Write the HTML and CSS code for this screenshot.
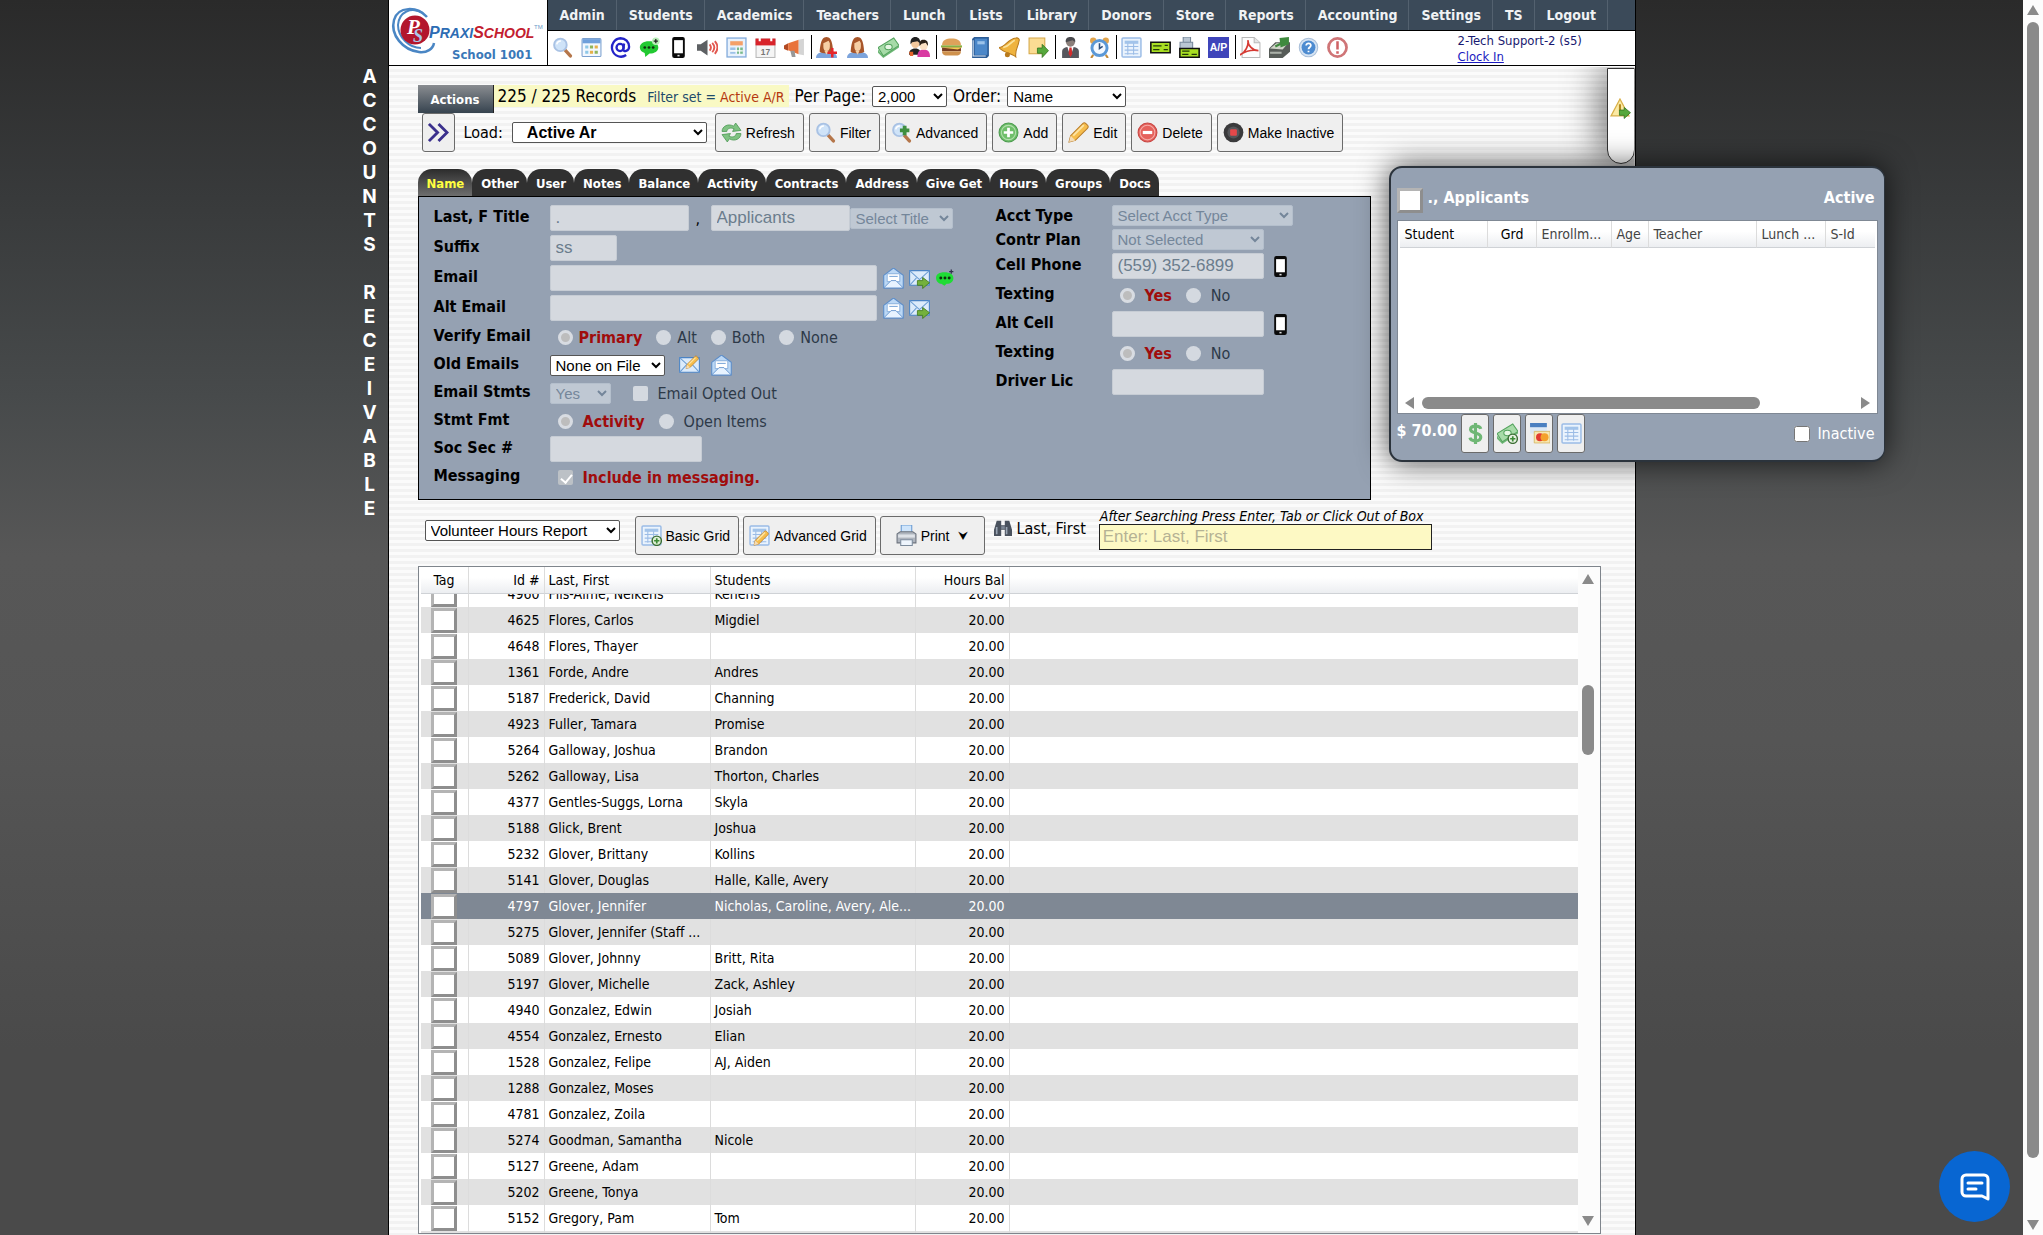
FILE: index.html
```html
<!DOCTYPE html>
<html lang="en">
  <head>
    <meta charset="UTF-8" />
    <meta name="viewport" content="width=device-width, initial-scale=1.0" />
    <title>PraxiSchool - Accounts Receivable</title>
    <link rel="stylesheet" href="styles.css">
  </head>
  <body>
    <!-- Icon set -->
    <svg class="icon-defs" width="0" height="0" aria-hidden="true">
      <symbol id="i-search" viewBox="0 0 20 20">
        <path d="M12.5 12.5l5 5.5" stroke="#b5764a" stroke-width="3.2" stroke-linecap="round"/>
        <circle cx="8" cy="7.500" r="6" fill="#cfe3f8" stroke="#a9c2e4" stroke-width="1.800"/>
        <path d="M4.500 7a4 4 0 0 1 4-3.200" stroke="#fff" stroke-width="1.500" fill="none"/>
      </symbol>
      <symbol id="i-month" viewBox="0 0 20 20">
        <rect x="1" y="1.500" width="18" height="17" rx="1" fill="#f3f8ff" stroke="#7ba0cf"/>
        <rect x="1.500" y="2" width="17" height="4" fill="#6f9fdb"/>
        <path d="M4 8h3v3H4zM4 13h3v3H4z" fill="#8fc8e8"/><path d="M8.500 8h3v3h-3zM13 13h3v3h-3z" fill="#8fb45c"/><path d="M13 8h3v3h-3zM8.500 13h3v3h-3z" fill="#e5b04a"/>
      </symbol>
      <symbol id="i-at" viewBox="0 0 20 20">
        <g fill="none" stroke="#2424c8" stroke-width="2.200"><circle cx="9.600" cy="10" r="3.400"/><path d="M13.400 6.200l-.8 5.800c0 2.400 5.600 1.800 5.600-2.600 0-4.800-3.600-8.200-8.200-8.200a8.600 8.800 0 1 0 5.400 16"/></g>
      </symbol>
      <symbol id="i-chat" viewBox="0 0 20 20">
        <path d="M9.500 4C4 4 .8 6.500.8 10c0 2.500 1.800 4.400 4.600 5.200L6 19l4-3.200c5 0 8.400-2.400 8.400-5.800S15 4 9.500 4z" fill="#22c932"/>
        <circle cx="16" cy="4" r="3.600" fill="#b9efb9"/><path d="M16 2v4M14 4h4" stroke="#222" stroke-width="1.200"/>
        <g fill="#10300f"><circle cx="5.500" cy="10" r="1.300"/><circle cx="9.500" cy="10" r="1.300"/><circle cx="13.500" cy="10" r="1.300"/></g>
      </symbol>
      <symbol id="i-chat-flat" viewBox="0 0 20 20">
        <path d="M9 4C4 4 1 6 1 9.500S4 15 6 15l3 2 2-2c4 0 6.500-2 6.500-5.500S14 4 9 4z" fill="#1fdc35"/>
        <path d="M15.500 1.500v4M13.500 3.500h4" stroke="#33304a" stroke-width="1.200"/>
        <g fill="#10300f"><circle cx="5.500" cy="9.500" r="1.400"/><circle cx="9.500" cy="9.500" r="1.400"/><circle cx="13.500" cy="9.500" r="1.400"/></g>
      </symbol>
      <symbol id="i-phone" viewBox="0 0 20 20">
        <rect x="4" y="0" width="12" height="20" rx="2" fill="#0a0a0a"/><rect x="5.800" y="3" width="8.400" height="12.500" fill="#fff"/><rect x="9" y="17" width="2" height="1.500" fill="#ddd"/>
      </symbol>
      <symbol id="i-speaker" viewBox="0 0 20 20">
        <path d="M0 7h3.500L10 2.500v15L3.500 13H0z" fill="#5d6063"/><path d="M12 7q2.500 3 0 6M14.500 5.500q4 4.500 0 9M17 4q5 6 0 12" fill="none" stroke="#e2574f" stroke-width="1.800"/>
      </symbol>
      <symbol id="i-sheet" viewBox="0 0 20 20">
        <rect x="1" y="1" width="18" height="18" fill="#e9f2fc" stroke="#86aedd" stroke-width="1.300"/><path d="M4 4h12v4H4z" fill="#f4a069"/><path d="M4 10h5v2.500H4zM4 14h5v2H4z" fill="#9dc2e8"/><path d="M10.500 10H16v6h-5.500z" fill="#78b98b"/><path d="M4 13.200h12M13 9v8" stroke="#fff"/>
      </symbol>
      <symbol id="i-horn" viewBox="0 0 20 20">
        <path d="M0 8l4-2v7l-4-1.500z" fill="#b24a22"/><path d="M4 6l10-3.500v14L4 12.500z" fill="#e9733b"/><path d="M14 2.500l5-.8v15.600l-5-.8z" fill="#d4d4d4"/><path d="M6 13h4l1 6H7.500z" fill="#989898"/>
      </symbol>
      <symbol id="i-woman" viewBox="0 0 20 20">
        <path d="M0 20c0-4 3-6 10-6s10 2 10 6z" fill="#7da4dc"/><path d="M3.500 14C4 11 4 0 10 0s6 11 6.500 14c-2 2-11 2-13 0z" fill="#a8562a"/><path d="M7 6l5-2.500 1.200 2.500v3c0 3-1.400 4.400-3.200 4.400S7 12 7 9z" fill="#f6cfa5"/><path d="M8 13h4l-2 4z" fill="#f6cfa5"/>
      </symbol>
      <symbol id="i-woman-add" viewBox="0 0 20 20">
        <use href="#i-woman"/><path d="M15.500 10.500v9M11 15h9" stroke="#e5252a" stroke-width="2.400"/>
      </symbol>
      <symbol id="i-cash" viewBox="0 0 20 20">
        <path d="M0 12v3l5 5 15-10V8L5 18z" fill="#6fb877"/><path d="M0 10L15 1l5 7L5 18z" fill="#a7dba8" stroke="#54a35e"/><ellipse cx="10" cy="9.500" rx="3.500" ry="2.600" fill="#e6f7e4" stroke="#54a35e"/>
      </symbol>
      <symbol id="i-cash-add" viewBox="0 0 20 20">
        <use href="#i-cash"/><circle cx="15" cy="15" r="4.400" fill="#e7f2e3" stroke="#3c6e35" stroke-width="1.400"/><path d="M15 12.500v5M12.500 15h5" stroke="#3c8a35" stroke-width="1.600"/>
      </symbol>
      <symbol id="i-people" viewBox="0 0 20 20">
        <path d="M0 17c0-4 2-6 6-6s5 2 5 6z" fill="#222"/><path d="M8 19c0-5 2-7 6-7s6 2 6 7z" fill="#d93aa2"/><path d="M0 14h4v4H1z" fill="#e4632a"/>
        <circle cx="6" cy="6.500" r="4" fill="#f3c89d"/><path d="M1.500 7C1 2 3 0 6 0s5 2 4.500 6L8 4 3 5z" fill="#222"/><circle cx="14" cy="8.500" r="3.700" fill="#fbe0c3"/><path d="M10 8.500C9.500 4 11 2.500 14 2.500s4.500 2 4 6l-2-3-4 1z" fill="#2b2018"/>
      </symbol>
      <symbol id="i-burger" viewBox="0 0 20 20">
        <path d="M1 8c0-5 4-6.500 9-6.500S19 3 19 8z" fill="#dea25b"/><path d="M0 8h20v2H0z" fill="#86b043"/><path d="M1 10h18v3.500H1z" fill="#7a3f22"/><path d="M0 10h20l-4 2z" fill="#f2cf4e"/><path d="M1 13.500h18c0 3-2 4-4 4H5c-2 0-4-1-4-4z" fill="#cf914c"/>
      </symbol>
      <symbol id="i-book" viewBox="0 0 20 20">
        <path d="M2 2l2-2h14v18l-2 2H2z" fill="#2b5c96"/><path d="M4.500 1.500h12V17h-12z" fill="#4c88c9"/><path d="M3 3v15h12" fill="none" stroke="#dfe9f5"/><path d="M7 4h7v3H7z" fill="#9cc3ea"/>
      </symbol>
      <symbol id="i-bell" viewBox="0 0 20 20">
        <path d="M0 10c6 0 8-8 16-9 2-.6 4 1 3 3-1 7-4 8-3 15-3-3-12-4-16-9z" fill="#efb33e" stroke="#b87a1c"/><path d="M4 10c6-1 7-5 11-7" stroke="#fbe39c" stroke-width="1.600" fill="none"/><circle cx="8" cy="17" r="2.400" fill="#b87a1c"/>
      </symbol>
      <symbol id="i-note-go" viewBox="0 0 20 20">
        <path d="M1 1h15v15H1z" fill="#fbdc93" stroke="#d5a84a"/><path d="M9 10.500h4.500V7l6 6-6 6.500v-4H9z" fill="#56a83c" stroke="#34761f" stroke-width=".8"/>
      </symbol>
      <symbol id="i-boss" viewBox="0 0 20 20">
        <path d="M2 20v-6c0-3 2-4 5-4.500h6c3 .5 5 1.500 5 4.500v6z" fill="#55565c"/><path d="M7 9.500l3 9 3-9z" fill="#fff"/><path d="M9 10h2l.8 6-1.800 3-1.800-3z" fill="#d22c2c"/><circle cx="10" cy="5" r="4.200" fill="#8b7f7a"/><path d="M5.500 5C5 1 7.500 0 10 0s5 1 4.500 5L12 3z" fill="#4a4a4e"/>
      </symbol>
      <symbol id="i-clock" viewBox="0 0 20 20">
        <circle cx="4" cy="3.500" r="3" fill="#e2a54d"/><circle cx="16" cy="3.500" r="3" fill="#e2a54d"/><path d="M4 17l-2 3M16 17l2 3" stroke="#c28a3a" stroke-width="2"/><circle cx="10" cy="10.500" r="7.200" fill="#f4f9ff" stroke="#5b98d6" stroke-width="2.800"/><path d="M10 6v5l3-2" stroke="#2d4f7c" stroke-width="1.500" fill="none"/>
      </symbol>
      <symbol id="i-table" viewBox="0 0 20 20">
        <rect x="1" y="1" width="18" height="18" rx="1" fill="#eaf3fd" stroke="#9bbce6" stroke-width="1.400"/><path d="M3.500 5h13" stroke="#a3c4ea" stroke-width="3"/><path d="M3.500 9h13M3.500 12.500h13M3.500 16h13M6.500 6v11M12 6v11" stroke="#9bbce6"/>
      </symbol>
      <symbol id="i-table-add" viewBox="0 0 20 20">
        <use href="#i-table"/><circle cx="15" cy="15" r="4.400" fill="#dff0d6" stroke="#3c6e35" stroke-width="1.400"/><path d="M15 12.500v5M12.500 15h5" stroke="#3c8a35" stroke-width="1.600"/>
      </symbol>
      <symbol id="i-pencil" viewBox="0 0 20 20">
        <path d="M1 19l1.500-6L14 1.500c1-1 2-1 3 0l1.500 1.500c1 1 1 2 0 3L7 17.500z" fill="#f6bd4c" stroke="#b97d2b"/><path d="M1 19l1.500-6 4.500 4.500z" fill="#f4dcb6"/><path d="M5 13L15 3" stroke="#fde4a3" stroke-width="1.800"/>
      </symbol>
      <symbol id="i-table-edit" viewBox="0 0 20 20">
        <use href="#i-table"/><use href="#i-pencil" x="4" y="5" width="15" height="15"/>
      </symbol>
      <symbol id="i-check" viewBox="0 0 20 20">
        <path d="M.8 5h18.400v10H.8z" fill="#a9df23" stroke="#111" stroke-width="1.500"/><path d="M3 8.500h8M3 12h6M13 12h4M14 8h3" stroke="#23380a" stroke-width="1.200"/>
      </symbol>
      <symbol id="i-check-print" viewBox="0 0 20 20">
        <path d="M4 0h7v5H4zM1 5h12v6H1z" fill="#b9c6d3" stroke="#76879a"/><path d="M.8 11h18.400v8.300H.8z" fill="#a9df23" stroke="#111" stroke-width="1.500"/><path d="M3 13.500h7M3 16.500h6M12 16.500h5" stroke="#23380a" stroke-width="1.200"/>
      </symbol>
      <symbol id="i-pdf" viewBox="0 0 20 20">
        <path d="M2 .5h11.500l5.500 5V19.500H2z" fill="#fdfdfd" stroke="#b9b9b9"/><path d="M13.500.5v5H19" fill="#e4e4e4" stroke="#b9b9b9"/><path d="M0 17c5-2 8.500-9 7.500-14 0 5 4.500 10 10 10-5-1-12 .5-17.500 4z" fill="none" stroke="#d63a33" stroke-width="1.600"/>
      </symbol>
      <symbol id="i-scan" viewBox="0 0 20 20">
        <path d="M0 11l6-6h14v9l-7 6H0z" fill="#575c58"/><path d="M1 11l6-5h11l-5 6z" fill="#cfd4c8"/><path d="M10 1l9-1v7l-8 3z" fill="#3f8a3e"/><path d="M6 9l6-3" stroke="#3f8a3e" stroke-width="2"/><path d="M1 15h11" stroke="#aab0a8" stroke-width="2"/>
      </symbol>
      <symbol id="i-help" viewBox="0 0 20 20">
        <circle cx="10" cy="10" r="8.800" fill="#d7e4f3" stroke="#a9bfd9"/><circle cx="10" cy="10" r="6.600" fill="#4d8bd0"/><path d="M7.800 8.200c0-3 4.600-2.800 4.400 0-.1 1.500-2.200 1.600-2.200 3.400M10 13v1.600" stroke="#fff" stroke-width="1.700" fill="none"/>
      </symbol>
      <symbol id="i-warn" viewBox="0 0 20 20">
        <circle cx="10" cy="10" r="8.600" fill="#fff" stroke="#cf7577" stroke-width="2.600"/><path d="M10 4v8M10 13.500v2.500" stroke="#cf6265" stroke-width="2.400"/>
      </symbol>
      <symbol id="i-alert-go" viewBox="0 0 20 20">
        <path d="M9.500 1L18 17H1z" fill="#fbeaa4" stroke="#d9b04a" stroke-width="1.200"/><path d="M9.500 6v6" stroke="#b58a1e" stroke-width="2"/><path d="M9 11.500h4.500V9l6 5-6 5.500v-3H9z" fill="#56a83c" stroke="#34761f" stroke-width=".8"/>
      </symbol>
      <symbol id="i-chevrons" viewBox="0 0 22 20">
        <path d="M1 1l9 9-9 9M11 1l9 9-9 9" fill="none" stroke="#3a2f8c" stroke-width="3"/>
      </symbol>
      <symbol id="i-refresh" viewBox="0 0 20 20">
        <path d="M1 9c0-5 6-8 11-5l2-3 5 7-8 1 1.500-2.500C9 5 6 6 5.500 9z" fill="#7fc282" stroke="#4f9a56" stroke-width=".8"/><path d="M19 11c0 5-6 8-11 5l-2 3-5-7 8-1-1.500 2.500c3.500 1.500 6.500.5 7-2.500z" fill="#7fc282" stroke="#4f9a56" stroke-width=".8"/>
      </symbol>
      <symbol id="i-search-add" viewBox="0 0 20 20">
        <use href="#i-search"/><path d="M13 3.500v9M8.500 8h9" stroke="#3f8f3f" stroke-width="3.600"/>
      </symbol>
      <symbol id="i-add" viewBox="0 0 20 20">
        <circle cx="10" cy="10" r="9" fill="#6fbf6a" stroke="#4d9c50"/><circle cx="10" cy="10" r="6.800" fill="none" stroke="#b3dfae"/><path d="M10 5.500v9M5.500 10h9" stroke="#fff" stroke-width="2.600"/>
      </symbol>
      <symbol id="i-delete" viewBox="0 0 20 20">
        <circle cx="10" cy="10" r="9" fill="#e5625c" stroke="#c84744"/><circle cx="10" cy="10" r="7" fill="none" stroke="#f5aaa6"/><path d="M5.500 10h9" stroke="#fff" stroke-width="3"/>
      </symbol>
      <symbol id="i-record" viewBox="0 0 20 20">
        <circle cx="10" cy="10" r="9.400" fill="#3a3a3c"/><circle cx="10" cy="10" r="5.800" fill="#55565a"/><rect x="6.800" y="6.800" width="6.400" height="6.400" rx="1" fill="#e5484a"/>
      </symbol>
      <symbol id="i-mail-open" viewBox="0 0 20 20">
        <path d="M.7 7L10 0l9.300 7v12H.7z" fill="#bcd8f5" stroke="#5b8cc8"/><path d="M4 5.500h12V13H4z" fill="#fff" stroke="#7ba6d8" stroke-width=".8"/><path d="M6 8h8" stroke="#7ba6d8"/><path d="M.7 19l7-7h4.600l7 7z" fill="#e8f3ff" stroke="#5b8cc8" stroke-width=".8"/>
      </symbol>
      <symbol id="i-mail" viewBox="0 0 20 20">
        <path d="M.6 2.500h18.800v14H.6z" fill="#dcebfb" stroke="#4b83c4"/><path d="M.6 2.500L10 11l9.400-8.500M.6 16.500l6.500-7M19.400 16.500l-6.500-7" fill="none" stroke="#6c9dd3"/>
      </symbol>
      <symbol id="i-mail-go" viewBox="0 0 20 20">
        <use href="#i-mail"/><path d="M8 12h5V9l6.500 5-6.500 5.500v-3H8z" fill="#74b13c" stroke="#427a1c" stroke-width=".8"/>
      </symbol>
      <symbol id="i-mail-edit" viewBox="0 0 20 20">
        <use href="#i-mail"/><use href="#i-pencil" x="6" y="0" width="13" height="14"/>
      </symbol>
      <symbol id="i-dollar" viewBox="0 0 20 20">
        <path d="M15 5.500C14.500 3.500 12.500 3 10 3 7 3 5.300 4 5.300 6.200 5.300 10.500 15 8.500 15 13.300c0 2.500-2 3.700-5 3.700-2.800 0-4.800-1-5.300-3M10 0v20" fill="none" stroke="#6fb775" stroke-width="3"/>
      </symbol>
      <symbol id="i-cards" viewBox="0 0 20 20">
        <path d="M1 0h16v10H1z" fill="#dbe8f6"/><path d="M1 0h16v4H1z" fill="#4a7fc0"/><path d="M5 8h15v11H5z" fill="#f7e7b2" stroke="#d8b862" stroke-width=".8"/><circle cx="10.500" cy="13.500" r="3.800" fill="#e23b32"/><circle cx="14.800" cy="13.500" r="3.800" fill="#f4a12c"/>
      </symbol>
      <symbol id="i-printer" viewBox="0 0 20 20">
        <path d="M5 0h10v8H5z" fill="#cfe5fb" stroke="#6a9bd2"/><path d="M1 8.500l3-2h12l3 2V17H1z" fill="#aeb4bd" stroke="#6c737d"/><path d="M2 9h16v3H2z" fill="#dfe3e8"/><path d="M4.500 14h11v5.500h-11z" fill="#eef5fd" stroke="#7c8b9c"/>
      </symbol>
      <symbol id="i-binoculars" viewBox="0 0 20 20">
        <path d="M3 2h5v5h4V2h5l3 10v7h-8v-7H8v7H0v-7z" fill="#4a525e"/><path d="M3 9v8M14 9v8" stroke="#9aa5b4" stroke-width="1.800"/><path d="M8 8h4v3H8z" fill="#7d8795"/>
      </symbol>
    </svg>

    <aside class="side-title">A<br>C<br>C<br>O<br>U<br>N<br>T<br>S<br><br>R<br>E<br>C<br>E<br>I<br>V<br>A<br>B<br>L<br>E</aside>

    <div class="page">
      <header class="header">
        <div class="logo">
          <svg width="158" height="65" viewBox="0 0 158 65" role="img" aria-label="PraxiSchool">
            <g fill="none" stroke="#4a86c4"><path d="M38 17C28 6 9 6 5 20c-4 15 9 30 25 32 8 1 14-3 15-9" stroke-width="2.500"/><path d="M34 13C22 6 10 12 9 25c0 12 11 23 23 23" stroke-width="2"/></g>
            <circle cx="26" cy="30" r="14.500" fill="#b3162d"/>
            <text x="18" y="34" class="logo-p">P</text><text x="24" y="42" class="logo-s">S</text>
            <text x="40" y="38" class="logo-name"><tspan class="blue">P</tspan><tspan class="blue cap">RAXI</tspan><tspan class="red">S</tspan><tspan class="red cap">CHOOL</tspan></text>
            <text x="145" y="29" class="logo-tm">TM</text>
            <text x="63" y="59" class="logo-sub">School 1001</text>
          </svg>
        </div>
        <div class="header-main">
          <nav class="menu">
            <a href="#">Admin</a><a href="#">Students</a><a href="#">Academics</a><a href="#">Teachers</a><a href="#">Lunch</a><a href="#">Lists</a><a href="#">Library</a><a href="#">Donors</a><a href="#">Store</a><a href="#">Reports</a><a href="#">Accounting</a><a href="#">Settings</a><a href="#">TS</a><a href="#">Logout</a>
          </nav>
          <div class="quick">
            <div class="quick-icons">
              <div class="icon-group">
                <svg class="icon"><use href="#i-search"/></svg><svg class="icon"><use href="#i-month"/></svg><svg class="icon"><use href="#i-at"/></svg><svg class="icon"><use href="#i-chat"/></svg><svg class="icon"><use href="#i-phone"/></svg><svg class="icon"><use href="#i-speaker"/></svg><svg class="icon"><use href="#i-sheet"/></svg>
                <svg class="icon" viewBox="0 0 20 20">
                  <rect x="1" y="2" width="18" height="17.500" fill="#f5f5f5" stroke="#b9b9b9"/><path d="M.5 1.500h19V8H.5z" fill="#d8232a"/><path d="M4.500 0v4M15.500 0v4" stroke="#fff" stroke-width="2"/>
                  <text x="10" y="17" text-anchor="middle" class="icon-num">17</text>
                </svg>
                <svg class="icon"><use href="#i-horn"/></svg>
              </div>
              <div class="icon-group wide">
                <svg class="icon"><use href="#i-woman-add"/></svg><svg class="icon"><use href="#i-woman"/></svg><svg class="icon"><use href="#i-cash"/></svg><svg class="icon"><use href="#i-people"/></svg>
              </div>
              <div class="icon-group">
                <svg class="icon"><use href="#i-burger"/></svg><svg class="icon"><use href="#i-book"/></svg><svg class="icon"><use href="#i-bell"/></svg><svg class="icon"><use href="#i-note-go"/></svg>
              </div>
              <div class="icon-group">
                <svg class="icon"><use href="#i-boss"/></svg><svg class="icon"><use href="#i-clock"/></svg>
              </div>
              <div class="icon-group">
                <svg class="icon"><use href="#i-table"/></svg><svg class="icon"><use href="#i-check"/></svg><svg class="icon"><use href="#i-check-print"/></svg>
                <svg class="icon" viewBox="0 0 20 20">
                  <path d="M0 0h20v20H0z" fill="#3f45ba"/><text x="10" y="13.500" text-anchor="middle" class="icon-ap">A/P</text>
                </svg>
              </div>
              <div class="icon-group">
                <svg class="icon"><use href="#i-pdf"/></svg><svg class="icon"><use href="#i-scan"/></svg><svg class="icon"><use href="#i-help"/></svg><svg class="icon"><use href="#i-warn"/></svg>
              </div>
            </div>
            <div class="user">
              <span>2-Tech Support-2 (s5)</span>
              <a href="#">Clock In</a>
            </div>
          </div>
        </div>
      </header>

      <main class="content">
        <div class="status-row">
          <div class="actions">Actions</div>
          <div class="records">225 / 225 Records <span class="filter-set">Filter set = <b>Active A/R</b></span></div>
          <label for="perPage">Per Page:</label>
          <select id="perPage" class="w-page"><option>2,000</option></select>
          <label for="order">Order:</label>
          <select id="order" class="w-order"><option>Name</option></select>
        </div>

        <div class="action-row">
          <button class="btn btn-go" aria-label="Next"><svg class="icon"><use href="#i-chevrons"/></svg></button>
          <label for="load">Load:</label>
          <select id="load" class="w-load"><option>Active Ar</option></select>
          <button class="btn"><svg class="icon"><use href="#i-refresh"/></svg>Refresh</button>
          <button class="btn"><svg class="icon"><use href="#i-search"/></svg>Filter</button>
          <button class="btn"><svg class="icon"><use href="#i-search-add"/></svg>Advanced</button>
          <button class="btn"><svg class="icon"><use href="#i-add"/></svg>Add</button>
          <button class="btn"><svg class="icon"><use href="#i-pencil"/></svg>Edit</button>
          <button class="btn"><svg class="icon"><use href="#i-delete"/></svg>Delete</button>
          <button class="btn"><svg class="icon"><use href="#i-record"/></svg>Make Inactive</button>
        </div>

        <div class="tabs">
          <button class="tab active">Name</button><button class="tab">Other</button><button class="tab">User</button><button class="tab">Notes</button><button class="tab">Balance</button><button class="tab">Activity</button><button class="tab">Contracts</button><button class="tab">Address</button><button class="tab">Give Get</button><button class="tab">Hours</button><button class="tab">Groups</button><button class="tab">Docs</button>
        </div>

        <form class="panel">
          <div class="form-col col-left">
            <div class="field tall">
              <label for="last">Last, F Title</label>
              <input type="text" id="last" class="w-name" value="." disabled><span class="comma">,</span>
              <input type="text" aria-label="First" class="w-name" value="Applicants" disabled>
              <select aria-label="Title" class="w-title" disabled><option>Select Title</option></select>
            </div>
            <div class="field tall"><label for="suffix">Suffix</label><input type="text" id="suffix" class="w-suffix" value="ss" disabled></div>
            <div class="field tall">
              <label for="email">Email</label><input type="text" id="email" class="w-email" disabled>
              <span class="field-icons"><svg class="icon"><use href="#i-mail-open"/></svg><svg class="icon"><use href="#i-mail-go"/></svg><svg class="icon"><use href="#i-chat-flat"/></svg></span>
            </div>
            <div class="field tall">
              <label for="altEmail">Alt Email</label><input type="text" id="altEmail" class="w-email" disabled>
              <span class="field-icons"><svg class="icon"><use href="#i-mail-open"/></svg><svg class="icon"><use href="#i-mail-go"/></svg></span>
            </div>
            <div class="field">
              <span class="label">Verify Email</span>
              <span class="choices">
                <label class="on"><input type="radio" name="verify" checked disabled>Primary</label>
                <label><input type="radio" name="verify" disabled>Alt</label>
                <label><input type="radio" name="verify" disabled>Both</label>
                <label><input type="radio" name="verify" disabled>None</label>
              </span>
            </div>
            <div class="field">
              <label for="oldEmails">Old Emails</label>
              <select id="oldEmails" class="w-old"><option>None on File</option></select>
              <span class="field-icons spaced"><svg class="icon"><use href="#i-mail-edit"/></svg><svg class="icon"><use href="#i-mail-open"/></svg></span>
            </div>
            <div class="field">
              <label for="emailStmts">Email Stmts</label>
              <select id="emailStmts" class="w-yes" disabled><option>Yes</option></select>
              <span class="choices loose"><label><input type="checkbox" disabled>Email Opted Out</label></span>
            </div>
            <div class="field">
              <span class="label">Stmt Fmt</span>
              <span class="choices loose">
                <label class="on"><input type="radio" name="fmt" checked disabled>Activity</label>
                <label><input type="radio" name="fmt" disabled>Open Items</label>
              </span>
            </div>
            <div class="field"><label for="ssn">Soc Sec #</label><input type="text" id="ssn" class="w-num" disabled></div>
            <div class="field">
              <span class="label">Messaging</span>
              <span class="choices loose"><label class="on"><input type="checkbox" checked disabled>Include in messaging.</label></span>
            </div>
          </div>

          <div class="form-col">
            <div class="field short"><label for="acctType">Acct Type</label><select id="acctType" class="w-acct" disabled><option>Select Acct Type</option></select></div>
            <div class="field short"><label for="contrPlan">Contr Plan</label><select id="contrPlan" class="w-num" disabled><option>Not Selected</option></select></div>
            <div class="field tall"><label for="cell">Cell Phone</label><input type="text" id="cell" class="w-num" value="(559) 352-6899" disabled><span class="field-icons"><svg class="icon"><use href="#i-phone"/></svg></span></div>
            <div class="field">
              <span class="label">Texting</span>
              <span class="choices loose">
                <label class="on"><input type="radio" name="text1" checked disabled>Yes</label>
                <label><input type="radio" name="text1" disabled>No</label>
              </span>
            </div>
            <div class="field tall"><label for="altCell">Alt Cell</label><input type="text" id="altCell" class="w-num" disabled><span class="field-icons"><svg class="icon"><use href="#i-phone"/></svg></span></div>
            <div class="field">
              <span class="label">Texting</span>
              <span class="choices loose">
                <label class="on"><input type="radio" name="text2" checked disabled>Yes</label>
                <label><input type="radio" name="text2" disabled>No</label>
              </span>
            </div>
            <div class="field tall"><label for="driver">Driver Lic</label><input type="text" id="driver" class="w-num" disabled></div>
          </div>
        </form>

        <div class="toolbar">
          <select class="w-report" aria-label="Report"><option>Volunteer Hours Report</option></select>
          <div class="toolbar-buttons">
            <button class="btn"><svg class="icon"><use href="#i-table-add"/></svg>Basic Grid</button>
            <button class="btn"><svg class="icon"><use href="#i-table-edit"/></svg>Advanced Grid</button>
            <button class="btn btn-print"><svg class="icon"><use href="#i-printer"/></svg>Print <span class="caret">⮟</span></button>
          </div>
          <label class="find" for="search"><svg class="icon"><use href="#i-binoculars"/></svg>Last, First</label>
          <div class="search">
            <em>After Searching Press Enter, Tab or Click Out of Box</em>
            <input type="text" id="search" placeholder="Enter: Last, First">
          </div>
        </div>

        <div class="grid">
          <div class="grid-view" id="gridView">
            <table id="account_list">
              <colgroup><col class="c-tag"><col class="c-id"><col class="c-name"><col class="c-students"><col class="c-hours"><col></colgroup>
              <thead>
                <tr><th class="center">Tag</th><th class="num">Id #</th><th>Last, First</th><th>Students</th><th class="num">Hours Bal</th><th></th></tr>
              </thead>
              <tbody></tbody>
            </table>
          </div>
          <div class="scroll-v" aria-hidden="true"><i class="up"></i><span class="track"><span class="thumb"></span></span><i class="down"></i></div>
        </div>
      </main>

      <div class="side-tab"><svg class="icon"><use href="#i-alert-go"/></svg></div>

      <section class="card">
        <div class="card-head">
          <input type="checkbox" class="tag-box" aria-label="Tag account">
          <strong>., Applicants</strong>
          <strong class="card-state">Active</strong>
        </div>
        <div class="card-grid">
          <table>
            <colgroup><col class="k-student"><col class="k-grd"><col class="k-enroll"><col class="k-age"><col class="k-teacher"><col class="k-lunch"><col></colgroup>
            <thead>
              <tr><th class="dark">Student</th><th class="dark num">Grd</th><th>Enrollm...</th><th>Age</th><th>Teacher</th><th>Lunch ...</th><th>S-Id</th></tr>
            </thead>
          </table>
          <div class="scroll-h" aria-hidden="true"><i class="left"></i><span class="track"><span class="thumb"></span></span><i class="right"></i></div>
        </div>
        <div class="card-foot">
          <strong>$ 70.00</strong>
          <button class="btn btn-icon" aria-label="Payment"><svg class="icon"><use href="#i-dollar"/></svg></button>
          <button class="btn btn-icon" aria-label="Add cash"><svg class="icon"><use href="#i-cash-add"/></svg></button>
          <button class="btn btn-icon" aria-label="Cards"><svg class="icon"><use href="#i-cards"/></svg></button>
          <button class="btn btn-icon" aria-label="Ledger"><svg class="icon"><use href="#i-table"/></svg></button>
          <label class="inactive"><input type="checkbox">Inactive</label>
        </div>
      </section>
    </div>

    <div class="scroll-v window-scroll" aria-hidden="true"><i class="up"></i><span class="track"><span class="thumb"></span></span><i class="down"></i></div>

    <button class="chat-button" aria-label="Chat">
      <svg width="32" height="32" viewBox="0 0 32 32" fill="none" stroke="#fff" stroke-width="3"><path d="M29 28l-6-3H7a4 4 0 0 1-4-4V8a4 4 0 0 1 4-4h18a4 4 0 0 1 4 4z" stroke-linejoin="round"/><path d="M9 12h14M9 18h8" stroke-linecap="round"/></svg>
    </button>

    <script>
      const accounts = [
        ["4960", "Flis-Aime, Neikens", "Kenens"],
        ["4625", "Flores, Carlos", "Migdiel"],
        ["4648", "Flores, Thayer", ""],
        ["1361", "Forde, Andre", "Andres"],
        ["5187", "Frederick, David", "Channing"],
        ["4923", "Fuller, Tamara", "Promise"],
        ["5264", "Galloway, Joshua", "Brandon"],
        ["5262", "Galloway, Lisa", "Thorton, Charles"],
        ["4377", "Gentles-Suggs, Lorna", "Skyla"],
        ["5188", "Glick, Brent", "Joshua"],
        ["5232", "Glover, Brittany", "Kollins"],
        ["5141", "Glover, Douglas", "Halle, Kalle, Avery"],
        ["4797", "Glover, Jennifer", "Nicholas, Caroline, Avery, Ale..."],
        ["5275", "Glover, Jennifer (Staff ...", ""],
        ["5089", "Glover, Johnny", "Britt, Rita"],
        ["5197", "Glover, Michelle", "Zack, Ashley"],
        ["4940", "Gonzalez, Edwin", "Josiah"],
        ["4554", "Gonzalez, Ernesto", "Elian"],
        ["1528", "Gonzalez, Felipe", "AJ, Aiden"],
        ["1288", "Gonzalez, Moses", ""],
        ["4781", "Gonzalez, Zoila", ""],
        ["5274", "Goodman, Samantha", "Nicole"],
        ["5127", "Greene, Adam", ""],
        ["5202", "Greene, Tonya", ""],
        ["5152", "Gregory, Pam", "Tom"],
      ];
      const selectedId = "4797";

      const tableBody = document
        .getElementById("account_list")
        .querySelector("tbody");
      for (const [id, name, students] of accounts) {
        const row = document.createElement("tr");
        if (id === selectedId) row.className = "selected";
        row.innerHTML = `
          <td class="center"><input type="checkbox" class="tag-box" aria-label="Tag ${id}"></td>
          <td class="num">${id}</td>
          <td>${name}</td>
          <td>${students}</td>
          <td class="num">20.00</td>
          <td></td>
        `;
        tableBody.appendChild(row);
      }
      const spare = document.createElement("tr");
      spare.innerHTML = "<td></td><td></td><td></td><td></td><td></td><td></td>";
      tableBody.appendChild(spare);

      document.getElementById("gridView").scrollTop = 13;
    </script>
  </body>
</html>
```

FILE: styles.css
```css
* {
  box-sizing: border-box;
}

body {
  margin: 0;
  height: 100vh;
  overflow: hidden;
  display: grid;
  grid-template-columns: 1fr minmax(0, 1248px) 1fr 20px;
  font-family: "DejaVu Sans Condensed", "DejaVu Sans", Tahoma, sans-serif;
  font-size: 16px;
  color: #000;
  background: linear-gradient(#2a2a2a 0%, #383a3b 16%, #474a4b 32%, #575757 45%, #555 60%, #4a4a4a 85%, #4a4a4a 100%);
}

button,
input,
select {
  font-family: "Liberation Sans", Arial, sans-serif;
  margin: 0;
}

.icon-defs {
  position: absolute;
}

.icon {
  width: 21px;
  height: 21px;
  flex: none;
  display: block;
}

.icon-num {
  font: bold 8px "Liberation Sans", sans-serif;
  fill: #777;
}

.icon-ap {
  font: bold 10px "Liberation Sans", sans-serif;
  fill: #fff;
}

.side-title {
  justify-self: end;
  width: 16px;
  margin-right: 10px;
  padding-top: 65px;
  font: bold 19px/24px Inter, sans-serif;
  color: #fff;
  text-align: center;
}

.page {
  position: relative;
  z-index: 1;
  display: flex;
  flex-direction: column;
  height: 100vh;
  border: solid #000;
  border-width: 0 1px;
  background: repeating-linear-gradient(#fbfbfb 0, #fbfbfb 3px, #f2f2f2 3px, #f2f2f2 6px);
}

/* Header */
.header {
  display: flex;
  background: #fff;
  border-bottom: 1px solid #000;
}

.logo {
  border-right: 1px solid #000;
  height: 65px;
}

.logo-p,
.logo-s {
  font: italic bold 21px "Liberation Serif", serif;
  fill: #fff;
}

.logo-s {
  font-size: 18px;
  fill: #a9c8ea;
}

.logo-name {
  font: italic bold 16px "Liberation Sans", sans-serif;
}

.logo-name .cap {
  font-size: 14px;
}

.logo-name .blue {
  fill: #2d6cb4;
}

.logo-name .red {
  fill: #c3202f;
}

.logo-tm {
  font: 6px "Liberation Sans", sans-serif;
  fill: #6a9ac8;
}

.logo-sub {
  font: bold 13px "DejaVu Sans Condensed", "DejaVu Sans", sans-serif;
  fill: #3a78b8;
}

.header-main {
  flex: 1;
}

.menu {
  display: flex;
  height: 31px;
  background: #3b4a59;
  border-bottom: 1px solid #000;
}

.menu a {
  padding: 0 11px 0 12px;
  border-right: 1px solid #53616f;
  font-size: 14px;
  font-weight: bold;
  line-height: 30px;
  color: #f0f2f4;
  text-decoration: none;
}

.quick {
  display: flex;
  height: 34px;
}

.quick-icons {
  display: flex;
  align-items: center;
  width: 910px;
  padding-bottom: 2px;
}

.icon-group {
  display: flex;
  align-items: center;
  gap: 8px;
  height: 24px;
  padding: 0 6px 0 4px;
}

.icon-group.wide {
  gap: 10px;
}

.icon-group + .icon-group {
  border-left: 1px solid #000;
}

.user {
  display: flex;
  flex-direction: column;
  padding-top: 2px;
  font-size: 13px;
  line-height: 16px;
  color: #191970;
}

.user a {
  color: #1a1ac0;
}

/* Top rows */
.content {
  flex: 1;
  min-height: 0;
  display: flex;
  flex-direction: column;
  padding: 19px 34px 1px 29px;
}

select {
  height: 21px;
  padding: 0 0 0 1px;
  border: 1px solid #555;
  border-radius: 2px;
  background-color: #fff;
  font-size: 15px;
  color: #000;
}

.w-page { width: 75px; }
.w-order { width: 119px; }
.w-load { width: 195px; }
.w-title { width: 103px; }
.w-old { width: 115px; }
.w-yes { width: 61px; }
.w-acct { width: 181px; }
.w-num { width: 152px; }
.w-report { width: 195px; }
.w-name { width: 139px; }
.w-suffix { width: 67px; }
.w-email { width: 327px; }

.status-row {
  display: flex;
  align-items: flex-start;
  height: 28px;
  font-size: 17px;
  line-height: 22px;
}

.status-row label {
  margin: 0 6px;
}

.status-row select {
  margin-top: 1px;
}

.actions {
  width: 76px;
  height: 28px;
  line-height: 29px;
  border-right: 1px solid #222;
  background: linear-gradient(#8a8d91, #36434f);
  font-size: 13px;
  font-weight: bold;
  color: #fff;
  text-align: center;
}

.records {
  height: 22px;
  padding: 0 0 0 4px;
  background: #f9f9c4;
}

.filter-set {
  margin: 0 4px 0 6px;
  font-size: 14px;
  color: #1d4a6b;
}

.filter-set b {
  font-weight: normal;
  color: #b5380f;
}

.action-row {
  display: flex;
  align-items: center;
  gap: 5px;
  padding-left: 4px;
}

.action-row label {
  margin: 0 4px;
}

.action-row .w-load {
  margin-right: 3px;
  padding-left: 10px;
  font-size: 16px;
  font-weight: bold;
}

.btn {
  display: flex;
  align-items: center;
  gap: 4px;
  height: 39px;
  padding: 0 8px 0 5px;
  border: 1px solid #6b6b6b;
  border-radius: 3px;
  background: #efefef;
  font-size: 14px;
  color: #000;
  cursor: pointer;
}

.btn:hover {
  background: #e2e2e2;
}

.btn-go {
  padding: 0 5px;
}

/* Tabs */
.tabs {
  display: flex;
  margin-top: 17px;
}

.tab {
  height: 27px;
  padding: 2px 8px 0 9px;
  border: none;
  border-radius: 14px 14px 0 0;
  background: #303030;
  font: bold 13px "DejaVu Sans Condensed", "DejaVu Sans", sans-serif;
  color: #fff;
  cursor: pointer;
}

.tab.active {
  background: linear-gradient(#2c2c2c, #6e6e6e);
  color: #ffff40;
}

/* Account form */
.panel {
  display: flex;
  width: 953px;
  min-height: 304px;
  padding: 6px 15px;
  border: 1px solid #000;
  background: #95a1b2;
}

.col-left {
  width: 562px;
}

.field {
  display: flex;
  align-items: center;
  height: 28px;
}

.field.tall {
  height: 30px;
}

.field.short {
  height: 24px;
}

.field > label,
.field > .label {
  width: 116px;
  padding-bottom: 4px;
  font-weight: bold;
}

.field.short > label {
  padding-bottom: 0;
}

.field input[type="text"] {
  height: 26px;
  padding: 0 5px;
  border: 1px solid #c6ccd4;
  border-radius: 2px;
  background: #d5d9df;
  font-size: 17px;
  color: #6b7d8d;
}

.field select:disabled {
  border-color: #b4bfcc;
  background-color: #bfc8d3;
  color: #74869a;
  opacity: 1;
}

.comma {
  width: 22px;
  padding-left: 7px;
}

.field-icons {
  display: flex;
  gap: 5px;
  margin-left: 6px;
}

.field-icons.spaced {
  gap: 11px;
  margin-left: 14px;
}

.choices {
  display: flex;
  align-items: center;
  gap: 14px;
  margin-left: 8px;
  color: #2d3948;
}

.choices label {
  display: flex;
  align-items: center;
  gap: 6px;
}

.choices.loose label {
  gap: 10px;
}

.choices .on {
  font-weight: bold;
  color: #a00c0c;
}

.choices input {
  appearance: none;
  width: 15px;
  height: 15px;
  border-radius: 2px;
  background: #d4d9e0;
}

.choices input[type="radio"] {
  border-radius: 50%;
}

.choices input[type="radio"]:checked {
  border: 3px solid #d8dce2;
  background: #bdbdbd;
}

.choices input[type="checkbox"]:checked {
  background: #bcc1c6;
  position: relative;
}

.choices input[type="checkbox"]:checked::after {
  content: "";
  position: absolute;
  left: 5px;
  top: 2px;
  width: 5px;
  height: 9px;
  border: solid #fff;
  border-width: 0 2px 2px 0;
  transform: rotate(40deg);
}

.w-yes + .choices {
  margin-left: 22px;
}

/* Toolbar */
.toolbar {
  display: flex;
  align-items: center;
  height: 49px;
  margin: 6px 0 11px 7px;
}

.toolbar-buttons {
  display: flex;
  align-self: flex-end;
  gap: 4px;
  margin: 0 9px 0 15px;
}

.btn-print {
  padding: 0 16px 0 15px;
}

.caret {
  margin-left: 5px;
  font-size: 12px;
}

.find {
  display: flex;
  align-items: center;
  gap: 4px;
  margin-right: 13px;
  padding-bottom: 5px;
}

.find .icon {
  width: 18px;
  height: 18px;
}

.search {
  display: flex;
  flex-direction: column;
  align-self: flex-start;
}

.search em {
  height: 18px;
  padding-left: 1px;
  font-size: 14px;
  line-height: 20px;
}

.search input {
  width: 333px;
  height: 26px;
  padding: 0 3px;
  border: 1px solid #222;
  background: #fdf9c4;
  font-size: 17px;
}

.search input::placeholder {
  color: #b5b294;
}

/* Account grid */
.grid {
  flex: 1;
  min-height: 0;
  display: flex;
  border: 1px solid #7f858c;
  background: #fff;
}

.grid-view {
  flex: 1;
  overflow: hidden;
  padding-left: 2px;
}

table {
  width: 100%;
  border-collapse: separate;
  border-spacing: 0;
  table-layout: fixed;
  font-size: 14px;
}

th,
td {
  height: 26px;
  padding: 0 4px;
  border-right: 1px solid #dcdcdc;
  font-weight: normal;
  text-align: left;
  white-space: nowrap;
  overflow: hidden;
}

th {
  height: 27px;
  border-bottom: 1px solid #cfd2d6;
  background: linear-gradient(#fff 40%, #eceef1);
}

#account_list th {
  position: sticky;
  top: 0;
  z-index: 1;
}

th:last-child,
td:last-child {
  border-right: none;
}

.num {
  text-align: right;
}

.center {
  padding: 0;
  text-align: center;
}

.c-tag { width: 48px; }
.c-id { width: 76px; }
.c-name { width: 166px; }
.c-students { width: 205px; }
.c-hours { width: 94px; }

tbody tr:nth-child(even) {
  background: #e1e1e1;
}

tbody tr.selected {
  background: #7f8894;
  color: #fff;
}

tbody tr.selected td {
  border-color: #7f8894;
}

.tag-box {
  appearance: none;
  display: inline-block;
  width: 26px;
  height: 25px;
  border: 3px solid;
  border-color: #b4b4b4 #8e8e8e #8e8e8e #b4b4b4;
  background: #fff;
  vertical-align: middle;
}

/* Scroll bars */
.scroll-v {
  display: flex;
  flex-direction: column;
  align-items: center;
  width: 22px;
  padding: 7px 1px 7px 0;
  background: #fcfcfc;
}

.track {
  flex: 1;
}

.thumb {
  display: block;
  width: 12px;
  border-radius: 6px;
  background: #8a8a8a;
}

.grid .thumb {
  height: 70px;
  margin-top: 101px;
}

.window-scroll {
  grid-column: 4;
  width: 20px;
  height: 100vh;
  padding: 5px 0;
}

.window-scroll .thumb {
  height: 92vh;
  margin-top: 7px;
}

.up,
.down,
.left,
.right {
  border: 6px solid transparent;
}

.up {
  border-top: none;
  border-bottom: 10px solid #8a8a8a;
}

.down {
  border-bottom: none;
  border-top: 10px solid #8a8a8a;
}

.left {
  border-left: none;
  border-right: 9px solid #8a8a8a;
}

.right {
  border-right: none;
  border-left: 9px solid #8a8a8a;
}

/* Tab that hangs over the right edge */
.side-tab {
  position: absolute;
  top: 68px;
  right: 0;
  display: flex;
  justify-content: center;
  width: 28px;
  height: 96px;
  padding-top: 29px;
  border: 1px solid #333;
  border-radius: 0 0 14px 14px;
  background: #fff;
  box-shadow: 0 0 40px rgba(0, 0, 0, 0.8);
  clip-path: inset(-1px 0 -40px -60px);
}

/* Floating account card */
.card {
  position: absolute;
  top: 166px;
  left: 1000px;
  width: 496px;
  padding: 20px 6px 7px;
  border: 2px solid #2b333c;
  border-width: 2px 1px 2px 2px;
  border-radius: 13px;
  background: #95a1b2;
  box-shadow: 0 0 30px rgba(0, 0, 0, 0.7);
  color: #fff;
}

.card-head {
  display: flex;
  align-items: center;
  gap: 5px;
  height: 25px;
  margin-bottom: 7px;
}

.card strong {
  padding-bottom: 6px;
}

.card-state {
  margin-left: auto;
  padding-right: 3px;
}

.card-grid {
  display: flex;
  flex-direction: column;
  justify-content: space-between;
  height: 194px;
  padding: 0 2px;
  border: 1px solid #7f8894;
  background: #fff;
}

.card-grid th {
  padding: 0 5px;
  font-size: 14px;
  color: #444;
}

.card-grid th.dark {
  color: #000;
}

.card-grid th.num {
  padding-right: 12px;
}

.k-student { width: 88px; }
.k-grd { width: 49px; }
.k-enroll { width: 75px; }
.k-age { width: 37px; }
.k-teacher { width: 108px; }
.k-lunch { width: 69px; }

.scroll-h {
  display: flex;
  align-items: center;
  gap: 8px;
  height: 21px;
  padding: 0 5px;
}

.scroll-h .thumb {
  width: 338px;
  height: 12px;
}

.card-foot {
  display: flex;
  align-items: center;
  gap: 4px;
}

.btn-icon {
  justify-content: center;
  width: 28px;
  padding: 0;
}

.inactive {
  display: flex;
  align-items: center;
  gap: 7px;
  margin-left: auto;
  padding-right: 3px;
}

.inactive input {
  width: 16px;
  height: 16px;
}

.chat-button {
  position: fixed;
  right: 33px;
  bottom: 13px;
  z-index: 2;
  display: flex;
  align-items: center;
  justify-content: center;
  width: 71px;
  height: 71px;
  border: none;
  border-radius: 50%;
  background: #0866d2;
  cursor: pointer;
}
```
